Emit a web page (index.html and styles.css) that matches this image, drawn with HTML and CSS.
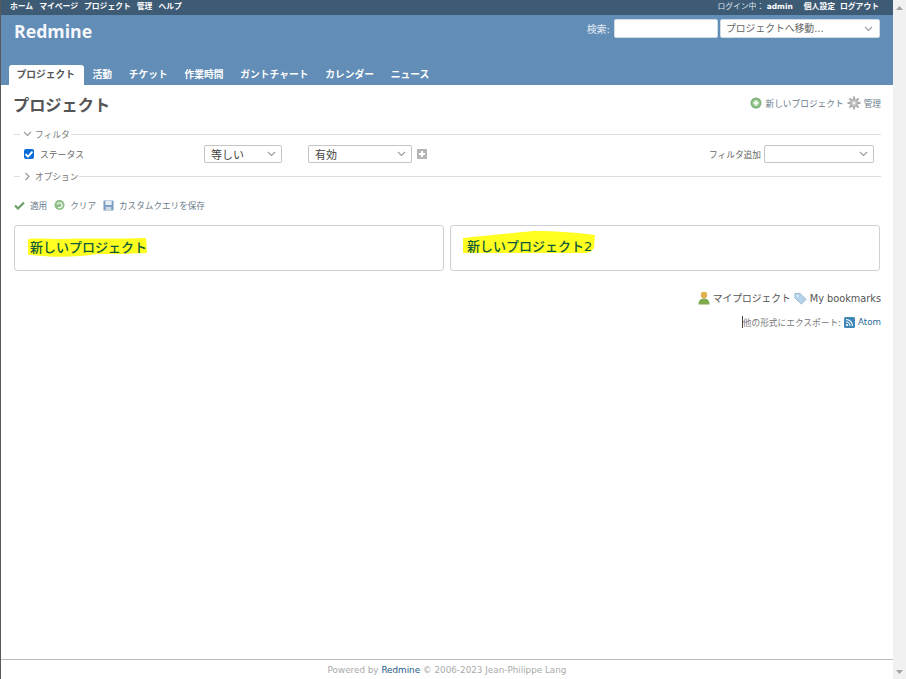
FILE: index.html
```html
<!DOCTYPE html>
<html lang="ja">
<head>
<meta charset="utf-8">
<title>プロジェクト - Redmine</title>
<link rel="stylesheet" href="styles.css">
</head>
<body>
<div class="page">
  <div class="top-menu">
    <ul class="top-links">
      <li>ホーム</li><li>マイページ</li><li>プロジェクト</li><li>管理</li><li>ヘルプ</li>
    </ul>
    <ul class="account">
      <li class="login">ログイン中： <b>admin</b></li><li>個人設定</li><li>ログアウト</li>
    </ul>
  </div>
  <header class="header">
    <div class="header-top">
      <h1 class="logo">Redmine</h1>
      <div class="quick">
        <span class="quick-label">検索:</span>
        <span class="quick-input"></span>
        <span class="jump">プロジェクトへ移動...
          <svg class="chev" width="9" height="6" viewBox="0 0 9 6"><path d="M1 1l3.500 3.500L8 1" fill="none" stroke="#9aa0a6" stroke-width="1.200"/></svg>
        </span>
      </div>
    </div>
    <nav class="tabs">
      <a class="tab active">プロジェクト</a><a class="tab">活動</a><a class="tab">チケット</a><a class="tab">作業時間</a><a class="tab">ガントチャート</a><a class="tab">カレンダー</a><a class="tab">ニュース</a>
    </nav>
  </header>
  <main class="content">
    <div class="title-row">
      <h2 class="title">プロジェクト</h2>
      <div class="actions">
        <span class="action">
          <svg width="12" height="12" viewBox="0 0 12 12"><circle cx="6" cy="6" r="5.500" fill="#7fb27a"/><circle cx="6" cy="6" r="3.600" fill="#a5d29f"/><path d="M6 3.500v5M3.500 6h5" stroke="#fff" stroke-width="1.600"/></svg>
          新しいプロジェクト</span>
        <span class="action">
          <svg width="14" height="14" viewBox="0 0 14 14"><circle cx="7" cy="7" r="4.600" fill="#bdbdbd"/><circle cx="7" cy="7" r="1.700" fill="#eee"/><path d="M7 .5v3M7 10.500v3M.5 7h3M10.500 7h3M2.400 2.400l2 2M9.600 9.600l2 2M11.600 2.400l-2 2M4.400 9.600l-2 2" stroke="#a8a8a8" stroke-width="1.800"/></svg>
          管理</span>
      </div>
    </div>

    <div class="fieldset-head head-filter">
      <span class="dash"></span>
      <svg class="fold" width="9" height="6" viewBox="0 0 9 6"><path d="M1 1l3.500 3.500L8 1" fill="none" stroke="#9a9a9a" stroke-width="1.200"/></svg>
      <span class="legend">フィルタ</span>
      <span class="rule"></span>
    </div>
    <div class="filter-row">
      <div class="status">
        <span class="check"><svg width="10" height="10" viewBox="0 0 10 10"><path d="M1.500 5.200l2.400 2.400 4.600-5" fill="none" stroke="#fff" stroke-width="1.800"/></svg></span>
        <span class="status-label">ステータス</span>
      </div>
      <span class="select op">等しい<svg class="chev" width="9" height="6" viewBox="0 0 9 6"><path d="M1 1l3.500 3.500L8 1" fill="none" stroke="#9aa0a6" stroke-width="1.200"/></svg></span>
      <span class="select val">有効<svg class="chev" width="9" height="6" viewBox="0 0 9 6"><path d="M1 1l3.500 3.500L8 1" fill="none" stroke="#9aa0a6" stroke-width="1.200"/></svg></span>
      <span class="plus"><svg width="10" height="10" viewBox="0 0 10 10"><path d="M5 2v6M2 5h6" stroke="#fff" stroke-width="2"/></svg></span>
      <div class="add-filter">
        <span class="add-label">フィルタ追加</span>
        <span class="select add"><svg class="chev" width="9" height="6" viewBox="0 0 9 6"><path d="M1 1l3.500 3.500L8 1" fill="none" stroke="#9aa0a6" stroke-width="1.200"/></svg></span>
      </div>
    </div>
    <div class="fieldset-head head-options">
      <span class="dash"></span>
      <svg class="fold" width="9" height="9" viewBox="0 0 9 9"><path d="M2.500 1l3.500 3.500L2.500 8" fill="none" stroke="#9a9a9a" stroke-width="1.200"/></svg>
      <span class="legend">オプション</span>
      <span class="rule"></span>
    </div>

    <div class="buttons">
      <span class="btn"><svg width="11" height="9" viewBox="0 0 11 9"><path d="M1 4.500l3 3 6-6" fill="none" stroke="#6fa06a" stroke-width="2.200"/></svg>適用</span>
      <span class="btn"><svg width="11" height="12" viewBox="0 0 12 13"><circle cx="6" cy="6.500" r="5.500" fill="#8fbf86"/><path d="M3.500 6a2.700 2.700 0 1 1 1 3" fill="none" stroke="#fff" stroke-width="1.300"/></svg>クリア</span>
      <span class="btn"><svg width="11" height="11" viewBox="0 0 12 12"><rect x=".5" y=".5" width="11" height="11" rx="1" fill="#7b9cc4"/><rect x="2.500" y="1" width="7" height="4.500" fill="#e6edf5"/><rect x="3" y="7.500" width="6" height="4" fill="#cfd8e3"/></svg>カスタムクエリを保存</span>
    </div>

    <div class="projects">
      <div class="card">
        <svg class="mark mark-a" width="119" height="21" viewBox="0 0 119 21" preserveAspectRatio="none"><path d="M1 2C10 1 20 2 30 2c30-1 60 0 88-1l1 15c-20 1-35 1-50 1-18 3-42 4-65 1-8 0-14 0-22-1z" fill="#ffff20"/></svg>
        <a class="project-name">新しいプロジェクト</a>
      </div>
      <div class="card">
        <svg class="mark mark-b" width="132" height="23" viewBox="0 0 132 23" preserveAspectRatio="none"><path d="M0 7C20 5 40 3 70 0c25 0 45 2 62 4l-1 13c-2 3-5 5-11 5H0z" fill="#ffff20"/></svg>
        <a class="project-name name-b">新しいプロジェクト2</a>
      </div>
    </div>

    <div class="links">
      <span class="link-item">
        <svg width="12" height="14" viewBox="0 0 12 14"><circle cx="6" cy="4" r="3.200" fill="#e2b04f"/><path d="M.5 13.500c0-4 2-6 5.500-6s5.500 2 5.500 6z" fill="#7fa84f"/></svg>
        マイプロジェクト</span>
      <span class="link-item">
        <svg width="13" height="13" viewBox="0 0 14 13"><path d="M1 1h5.500l6.500 6.500-5 5L1 6z" fill="#b5d3ea" stroke="#9ab5c9"/><circle cx="3.800" cy="3.600" r="1" fill="#fff"/></svg>
        My bookmarks</span>
    </div>
    <div class="export">
      <span class="caret"></span>他の形式にエクスポート:
      <svg width="11" height="11" viewBox="0 0 11 11"><rect width="11" height="11" rx="1.500" fill="#3f87b8"/><circle cx="3" cy="8" r="1.100" fill="#fff"/><path d="M2 5a4 4 0 0 1 4 4M2 2.500A6.500 6.500 0 0 1 8.500 9" fill="none" stroke="#fff" stroke-width="1.100"/></svg>
      <a class="atom">Atom</a>
    </div>
  </main>
  <footer class="footer">Powered by <a class="footer-link">Redmine</a> © 2006-2023 Jean-Philippe Lang</footer>
</div>
<aside class="scrollbar">
  <svg width="7" height="4" viewBox="0 0 7 4"><path d="M3.500 0L7 4H0z" fill="#a3a3a3"/></svg>
  <svg width="7" height="4" viewBox="0 0 7 4"><path d="M3.500 4L7 0H0z" fill="#a3a3a3"/></svg>
</aside>
</body>
</html>
```
FILE: styles.css
```css
* { box-sizing: border-box; }
html, body { margin: 0; height: 679px; overflow: hidden; }
body {
  display: flex;
  background: #fff;
  color: #555;
  font-family: "DejaVu Sans", "Noto Sans CJK JP", sans-serif;
  font-size: 9px;
  border-left: 1px solid #5a5a5a;
}
ul { list-style: none; margin: 0; padding: 0; display: flex; }
h1, h2 { margin: 0; }

.page { flex: 1; min-width: 0; display: flex; flex-direction: column; height: 679px; }

.top-menu {
  height: 15px;
  background: #3e5b76;
  color: #fff;
  font-weight: 700;
  font-size: 7.800px;
  line-height: 14px;
  display: flex;
  justify-content: space-between;
  padding: 0 14px 0 9px;
}
.top-links { gap: 6px; }
.account { gap: 5px; }
.login { font-weight: 400; color: #dbe4ec; margin-right: 6px; }
.login b { color: #fff; font-size: 7.500px; }

.header {
  height: 70px;
  background: #628db6;
  display: flex;
  flex-direction: column;
  justify-content: space-between;
}
.header-top { display: flex; justify-content: space-between; padding: 4px 13px 0 13px; }
.logo { color: #f4f8fc; font-size: 17.700px; font-weight: 700; line-height: 25px; font-family: "Open Sans", "DejaVu Sans", sans-serif; }
.quick { display: flex; align-items: center; height: 19px; margin-top: 0; }
.quick-label { color: #e6eef5; font-size: 10px; margin-right: 4px; }
.quick-input { width: 104px; height: 19px; background: #fff; border-radius: 2px; border: 1px solid #d0dbe6; margin-right: 2px; }
.jump {
  width: 160px; height: 19px; background: #fff; border-radius: 2px; border: 1px solid #d0dbe6;
  font-size: 9.800px; line-height: 17px; padding-left: 5px; color: #666;
  display: flex; justify-content: space-between; align-items: center; padding-right: 6px;
}

.tabs { display: flex; padding-left: 8px; height: 20px; align-items: flex-end; }
.tab {
  color: #fff; font-weight: 700; font-size: 9.750px; line-height: 20px; height: 20px;
  padding: 0 8.400px; white-space: nowrap;
}
.tab.active { background: #fff; color: #555; border-radius: 3px 3px 0 0; padding: 0 7.500px; width: 75px; }

.content { flex: 1; padding: 0 12px 0 13px; min-height: 0; }
.title-row { display: flex; justify-content: space-between; height: 33px; }
.title { font-size: 16.200px; line-height: 22px; padding-top: 10px; margin-left: -1px; font-weight: 700; color: #555; box-sizing: content-box; }
.actions { display: flex; gap: 3px; padding-top: 12px; height: 24px; font-size: 8.700px; color: #6b7c8c; }
.action { display: flex; align-items: center; gap: 3px; }

.fieldset-head { display: flex; align-items: center; height: 12px; color: #777; }
.head-filter { margin-top: 10px; }
.dash { width: 6px; height: 1px; background: #dedede; margin-right: 3px; }
.fold { margin-right: 3px; }
.legend { font-size: 8.700px; margin-right: 1px; }
.rule { flex: 1; height: 1px; background: #dedede; }

.filter-row { display: flex; align-items: center; height: 26px; margin: 1px 7px 3px 10px; }
.status { display: flex; align-items: center; width: 180px; }
.check {
  width: 10px; height: 10px; border-radius: 2px; background: #0b6ed8;
  display: flex; margin-right: 6px;
}
.status-label { font-size: 8.800px; color: #666; }
.select {
  height: 18px; border: 1px solid #c5c5c5; border-radius: 2px; background: #fff;
  display: flex; align-items: center; justify-content: space-between;
  font-size: 11px; color: #444; padding: 0 5px 0 6px;
}
.op { width: 78px; margin-right: 26px; }
.val { width: 104px; margin-right: 5px; }
.plus { width: 10px; height: 10px; background: #b5b5b5; display: flex; }
.add-filter { margin-left: auto; display: flex; align-items: center; gap: 3px; }
.add-label { font-size: 8.700px; color: #666; }
.add { width: 110px; justify-content: flex-end; }

.buttons { display: flex; gap: 7px; margin-top: 16px; height: 14px; align-items: center; }
.btn { display: flex; align-items: center; gap: 5px; font-size: 8.600px; color: #6b7c8c; }

.projects { display: grid; grid-template-columns: 430px 430px; gap: 6px; margin-top: 13px; }
.card { position: relative; height: 46px; border: 1px solid #d0d0d0; border-radius: 3px; padding: 12px 15px; }
.project-name { position: relative; font-size: 13px; line-height: 20px; color: #0f5a3a; display: block; font-weight: 500; }
.name-b { padding-left: 1px; top: -1px; }
.mark { position: absolute; }
.mark-a { left: 13px; top: 11px; }
.mark-b { left: 12px; top: 5px; }

.links { display: flex; justify-content: flex-end; gap: 3px; margin-top: 19px; height: 16px; font-size: 9.750px; color: #555; }
.link-item { display: flex; align-items: center; gap: 3px; }
.export { display: flex; justify-content: flex-end; align-items: center; gap: 3px; margin-top: 8px; height: 16px; font-size: 8.700px; color: #777; }
.caret { width: 1px; height: 12px; background: #444; margin-right: -3px; }
.atom { color: #2a6a9a; }

.footer {
  height: 20px; border-top: 1px solid #bbb; text-align: center; color: #aaa;
  font-size: 8.800px; line-height: 20px;
}
.footer-link { color: #1d5a86; }

.scrollbar {
  width: 13px; height: 679px; background: #f1f1f1;
  display: flex; flex-direction: column; justify-content: space-between; align-items: center;
  padding: 6px 0 5px;
  flex: none;
}
```
